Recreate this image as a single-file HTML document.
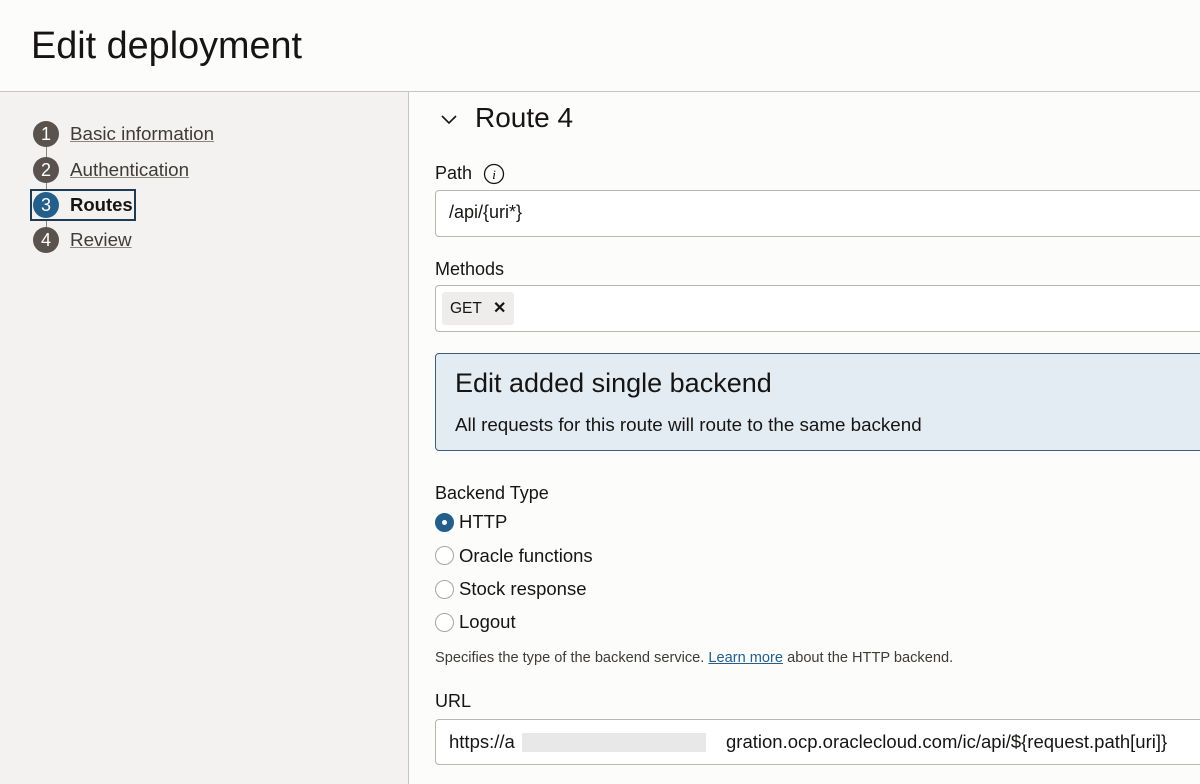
<!DOCTYPE html>
<html><head><meta charset="utf-8"><style>
*{margin:0;padding:0;box-sizing:border-box}
body{width:1200px;height:784px;overflow:hidden;background:#fcfcfb;font-family:"Liberation Sans",sans-serif;color:#161513;position:relative}
.a{position:absolute;white-space:nowrap}
.hdr{left:0;top:0;width:1200px;height:92px;border-bottom:1px solid #c9c6c2;background:#fcfcfb}
.side{left:0;top:92px;width:409px;height:692px;background:#f3f2f1;border-right:1px solid #c9c6c2}
.num{width:26px;height:26px;border-radius:50%;background:#5a524c;color:#fff;font-size:18px;text-align:center;line-height:26px}
.lnk{font-size:18.8px;color:#3f3b37;text-decoration:underline;text-decoration-color:#8a857f}
.inp{border:1px solid #b9b5b0;border-radius:4px;background:#fff;left:435px;width:780px}
.lbl{font-size:18px;color:#161513}
.radio{width:19px;height:19px;border-radius:50%;border:1px solid #a9a4a0;background:#fff}
.rl{font-size:18.5px}
</style></head><body>
<div class="a hdr"></div>
<div class="a" style="left:31px;top:25px;font-size:37.8px">Edit deployment</div>
<div class="a side"></div>
<div class="a" style="left:46px;top:134px;width:1px;height:110px;background:#8a857f"></div>
<div class="a num" style="left:33px;top:121px">1</div><div class="a lnk" style="left:70px;top:123px">Basic information</div>
<div class="a num" style="left:33px;top:157px">2</div><div class="a lnk" style="left:70px;top:159px">Authentication</div>
<div class="a" style="left:30px;top:189px;width:106px;height:32px;border:2px solid #1d3b52;background:#f3f2f1"></div>
<div class="a num" style="left:33px;top:192px;background:#235f8a">3</div><div class="a" style="left:70px;top:194px;font-size:18.5px;font-weight:bold">Routes</div>
<div class="a num" style="left:33px;top:227px">4</div><div class="a lnk" style="left:70px;top:229px">Review</div>

<svg class="a" style="left:440px;top:112px" width="18" height="14" viewBox="0 0 18 14"><path d="M2 4 L9 11 L16 4" fill="none" stroke="#161513" stroke-width="1.6"/></svg>
<div class="a" style="left:475px;top:102px;font-size:28px">Route 4</div>
<div class="a lbl" style="left:435px;top:163px">Path</div>
<svg class="a" style="left:483px;top:163px" width="22" height="22"><circle cx="11" cy="11" r="9.5" fill="none" stroke="#161513" stroke-width="1.3"/><text x="11" y="16" text-anchor="middle" font-family="Liberation Serif" font-style="italic" font-size="13">i</text></svg>
<div class="a inp" style="top:190px;height:47px"></div>
<div class="a" style="left:449px;top:202px;font-size:18px">/api/{uri*}</div>
<div class="a lbl" style="left:435px;top:259px">Methods</div>
<div class="a inp" style="top:285px;height:47px"></div>
<div class="a" style="left:442px;top:292px;width:72px;height:33px;background:#efedeb;border-radius:3px"></div>
<div class="a" style="left:450px;top:300px;font-size:15.5px">GET</div>
<div class="a" style="left:493px;top:298px;font-size:16px;font-weight:bold">✕</div>
<div class="a" style="left:435px;top:353px;width:780px;height:98px;background:#e4ecf3;border:1px solid #3d5e7a;border-radius:4px"></div>
<div class="a" style="left:455px;top:368px;font-size:27px">Edit added single backend</div>
<div class="a" style="left:455px;top:414px;font-size:18.8px">All requests for this route will route to the same backend</div>
<div class="a lbl" style="left:435px;top:483px">Backend Type</div>
<div class="a radio" style="left:435px;top:513px;background:#235f8a;border-color:#235f8a"></div>
<div class="a" style="left:442px;top:520px;width:5px;height:5px;border-radius:50%;background:#fff"></div>
<div class="a rl" style="left:459px;top:511px">HTTP</div>
<div class="a radio" style="left:435px;top:546px"></div><div class="a rl" style="left:459px;top:545px">Oracle functions</div>
<div class="a radio" style="left:435px;top:580px"></div><div class="a rl" style="left:459px;top:578px">Stock response</div>
<div class="a radio" style="left:435px;top:613px"></div><div class="a rl" style="left:459px;top:611px">Logout</div>
<div class="a" style="left:435px;top:650px;font-size:14.6px;color:#3f3b37">Specifies the type of the backend service. <span style="color:#235f8a;text-decoration:underline">Learn more</span> about the HTTP backend.</div>
<div class="a lbl" style="left:435px;top:691px">URL</div>
<div class="a inp" style="top:719px;height:46px"></div>
<div class="a" style="left:449px;top:731px;font-size:18.5px">https://a</div>
<div class="a" style="left:522px;top:733px;width:184px;height:19px;background:#e8e8e8"></div>
<div class="a" style="left:726px;top:731px;font-size:18.5px">gration.ocp.oraclecloud.com/ic/api/${request.path[uri]}</div>
</body></html>
